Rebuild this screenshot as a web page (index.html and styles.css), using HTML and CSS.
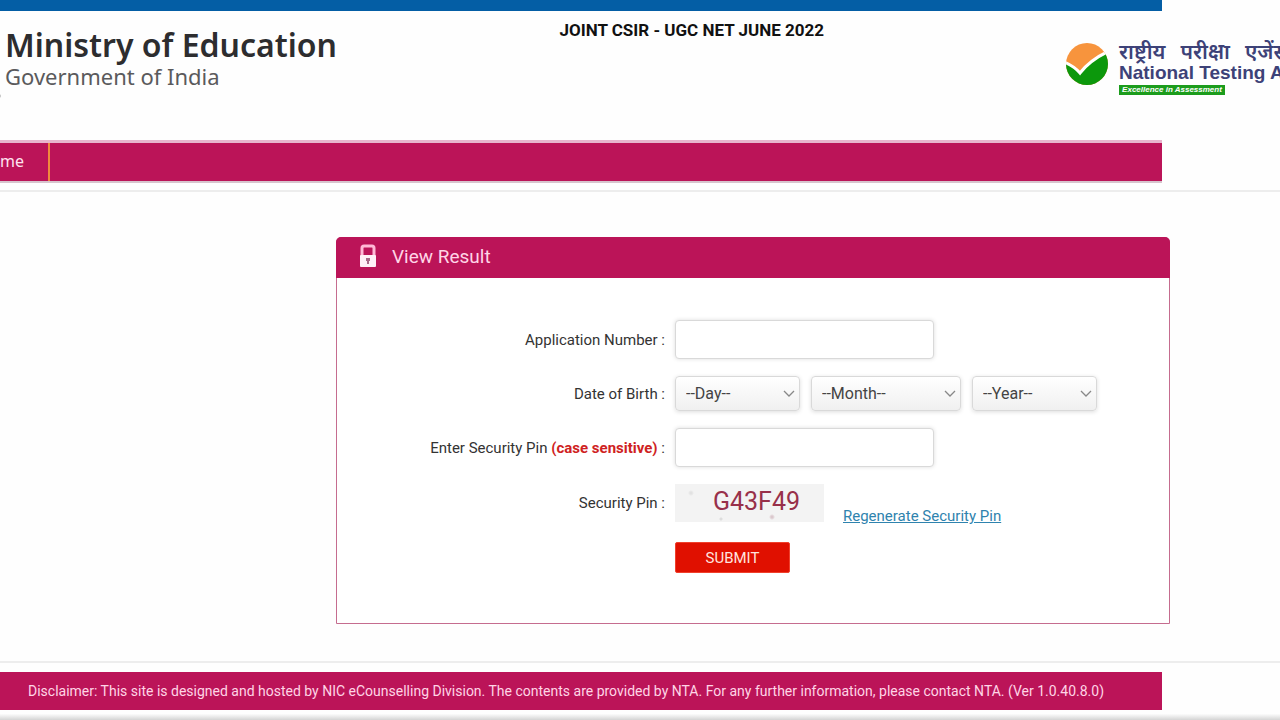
FILE: index.html
```html
<!DOCTYPE html>
<html lang="en">

<head>
  <meta charset="utf-8">
  <title>JOINT CSIR - UGC NET JUNE 2022</title>
  <link rel="stylesheet" href="styles.css">
</head>

<body>
  <div class="topbar"></div>

  <header class="header">
    <div class="ministry">
      <div class="ministry-name">Ministry of Education</div>
      <div class="ministry-gov">Government of India</div>
      <svg class="emblem-edge" width="2" height="10" viewBox="0 0 2 10"><path d="M0 1Q2 5 0 9" fill="none" stroke="#777"/></svg>
    </div>
    <h1 class="exam">JOINT CSIR - UGC NET JUNE 2022</h1>
    <div class="nta">
      <svg class="nta-logo" width="42" height="42" viewBox="0 0 42 42">
        <clipPath id="disc"><circle cx="21" cy="21" r="21"/></clipPath>
        <g clip-path="url(#disc)">
          <rect width="42" height="42" fill="#f7943d"/>
          <path d="M0 20Q8 24 14 31Q25 17 42 10V42H0Z" fill="#0c980c"/>
          <path d="M-2 19Q8 23 14 30Q24 17 43 8" fill="none" stroke="#fff" stroke-width="3"/>
        </g>
      </svg>
      <div class="nta-text">
        <div class="nta-hindi" lang="hi"><span>राष्ट्रीय</span> <span>परीक्षा</span> <span>एजेंसी</span></div>
        <div class="nta-name">National Testing Agency</div>
        <div class="nta-motto">Excellence in Assessment</div>
      </div>
    </div>
  </header>

  <nav class="nav">
    <a class="nav-link" href="#">Home</a>
  </nav>

  <main class="main">
    <section class="panel">
      <h2 class="panel-title">
        <svg width="18" height="24" viewBox="0 0 18 24">
          <path d="M3 12V4Q3 2 5 2H13Q15 2 15 4V12" fill="none" stroke="#ffb9d6" stroke-width="3"/>
          <rect x="1" y="11" width="16" height="12" rx="1" fill="#fff0f7"/>
          <path d="M7 14H11V17H10V20H8V17H7Z" fill="#a76a88"/>
        </svg>
        View Result
      </h2>

      <form class="form">
        <label class="label" for="appno">Application Number :</label>
        <input class="text" type="text" id="appno">

        <label class="label" for="day">Date of Birth :</label>
        <div class="dob">
          <select class="select" id="day">
            <option>--Day--</option>
          </select>
          <select class="select month" aria-label="Month">
            <option>--Month--</option>
          </select>
          <select class="select" aria-label="Year">
            <option>--Year--</option>
          </select>
        </div>

        <label class="label" for="pin">Enter Security Pin <b class="case">(case sensitive)</b> :</label>
        <input class="text" type="text" id="pin">

        <span class="label">Security Pin :</span>
        <div class="captcha-row">
          <div class="captcha">G43F49</div>
          <a class="regenerate" href="#">Regenerate Security Pin</a>
        </div>

        <button class="submit" type="submit">SUBMIT</button>
      </form>
    </section>
  </main>

  <footer class="footer">
    <p class="disclaimer">Disclaimer: This site is designed and hosted by NIC eCounselling Division. The contents are provided by NTA. For any further information, please contact NTA. (Ver 1.0.40.8.0)</p>
  </footer>
  <div class="page-end"></div>
</body>

</html>
```
FILE: styles.css
```css
* {
  box-sizing: border-box;
}

body {
  margin: 0;
  background: #fefefe;
  font-family: Roboto, "Liberation Sans", sans-serif;
  font-size: 15px;
  color: #333;
}

.topbar {
  height: 11px;
  margin-right: 118px;
  background: #045ea5;
}

.header {
  display: grid;
  grid-template-columns: 1fr auto 214px;
  height: 129px;
  padding-left: 5px;
}

.ministry {
  position: relative;
  padding-top: 14px;
  font-family: "Noto Sans", sans-serif;
}

.ministry-name {
  font-size: 32px;
  line-height: 40px;
  font-weight: 600;
  color: #2d2d2f;
}

.ministry-gov {
  font-size: 22px;
  line-height: 22px;
  color: #5a5a5c;
}

.emblem-edge {
  position: absolute;
  left: -6px;
  top: 80px;
}

.exam {
  margin: 0 242px 0 0;
  padding-top: 9px;
  font-size: 17px;
  line-height: 20px;
  font-weight: bold;
  color: #111;
}

.nta {
  display: flex;
  gap: 11px;
  padding-top: 28px;
  overflow: hidden;
  white-space: nowrap;
}

.nta-logo {
  flex: none;
  margin-top: 4px;
}

.nta-hindi {
  display: flex;
  gap: 15px;
  font-family: "Noto Sans", sans-serif;
  font-size: 21px;
  line-height: 24px;
  font-weight: 600;
  color: #3d4278;
}

.nta-name {
  font-family: "Liberation Sans", sans-serif;
  font-size: 19px;
  line-height: 20px;
  font-weight: bold;
  color: #3d4278;
}

.nta-motto {
  width: 106px;
  margin-top: 2px;
  background: #1c9c1c;
  font-family: "Liberation Sans", sans-serif;
  font-size: 8px;
  line-height: 10px;
  font-weight: bold;
  font-style: italic;
  text-align: center;
  color: #fff;
}

.nav {
  display: flex;
  height: 43px;
  margin-right: 118px;
  border-top: 3px solid #e8b5cd;
  border-bottom: 2px solid #d7c4cd;
  background: #bb1458;
}

.nav-link {
  display: flex;
  justify-content: flex-end;
  width: 50px;
  padding-right: 24px;
  border-right: 2px solid #f08a3c;
  font-family: "Noto Sans", sans-serif;
  font-size: 16px;
  line-height: 37px;
  color: #ffe3ef;
  text-decoration: none;
}

.main {
  margin-top: 7px;
  padding: 45px 110px 37px 336px;
  border-top: 2px solid #ededed;
  border-bottom: 2px solid #ededed;
}

.panel {
  min-height: 387px;
  border: 1px solid #c56c8f;
  border-radius: 5px 5px 0 0;
  background: #fff;
}

.panel-title {
  display: flex;
  align-items: center;
  gap: 15px;
  height: 41px;
  margin: -1px -1px 0;
  padding: 0 23px 3px;
  border-radius: 5px 5px 0 0;
  background: #bb1458;
  font-size: 19px;
  font-weight: normal;
  color: #ffd5e6;
}

.form {
  display: grid;
  grid-template-columns: 328px 1fr;
  column-gap: 10px;
  row-gap: 17px;
  align-items: center;
  padding-top: 42px;
}

.label {
  text-align: right;
}

.case {
  font-weight: bold;
  color: #cf2222;
}

.text {
  width: 259px;
  height: 39px;
  border: 1px solid #d9d9d9;
  border-radius: 4px;
  background: #fff;
  box-shadow: 0 0 4px #ddd;
  font: inherit;
}

.dob {
  display: flex;
  gap: 11px;
}

.select {
  width: 125px;
  height: 35px;
  padding: 0 10px;
  appearance: none;
  border: 1px solid #d9d9d9;
  border-radius: 4px;
  background: url("data:image/svg+xml,%3Csvg xmlns='http://www.w3.org/2000/svg' width='12' height='8'%3E%3Cpath d='M1 1l5 5 5-5' fill='none' stroke='%23888' stroke-width='1.3'/%3E%3C/svg%3E") no-repeat right 4px center, linear-gradient(#fff, #f0f0f0);
  box-shadow: 0 1px 4px #ddd;
  font-family: inherit;
  font-size: 16px;
  color: #444;
}

.month {
  width: 150px;
}

.captcha-row {
  display: flex;
  gap: 19px;
  align-items: flex-end;
}

.captcha {
  width: 149px;
  height: 38px;
  padding-left: 14px;
  background: radial-gradient(circle at 16px 9px, #e2e2e2 1px, transparent 3px), radial-gradient(circle at 97px 33px, #dbc8cd 1px, transparent 3px), radial-gradient(circle at 46px 35px, #ddd 1px, transparent 2px), #f3f3f3;
  font-size: 25px;
  line-height: 36px;
  text-align: center;
  color: #98304a;
}

.regenerate {
  line-height: 12px;
  color: #2f83ae;
}

.submit {
  grid-column: 2;
  justify-self: start;
  width: 115px;
  height: 31px;
  margin-top: 3px;
  border: 1px solid #f0402c;
  border-radius: 2px;
  background: #e01000;
  font-family: inherit;
  font-size: 15px;
  color: #ffe3df;
}

.footer {
  margin: 9px 118px 0 0;
  padding: 0 28px;
  background: #bb1458;
}

.disclaimer {
  margin: 0;
  font-size: 14px;
  line-height: 38px;
  color: #ffd5e6;
}

.page-end {
  height: 9px;
  margin-top: 1px;
  background: linear-gradient(#fefefe 30%, #d4d4d4);
}
```
